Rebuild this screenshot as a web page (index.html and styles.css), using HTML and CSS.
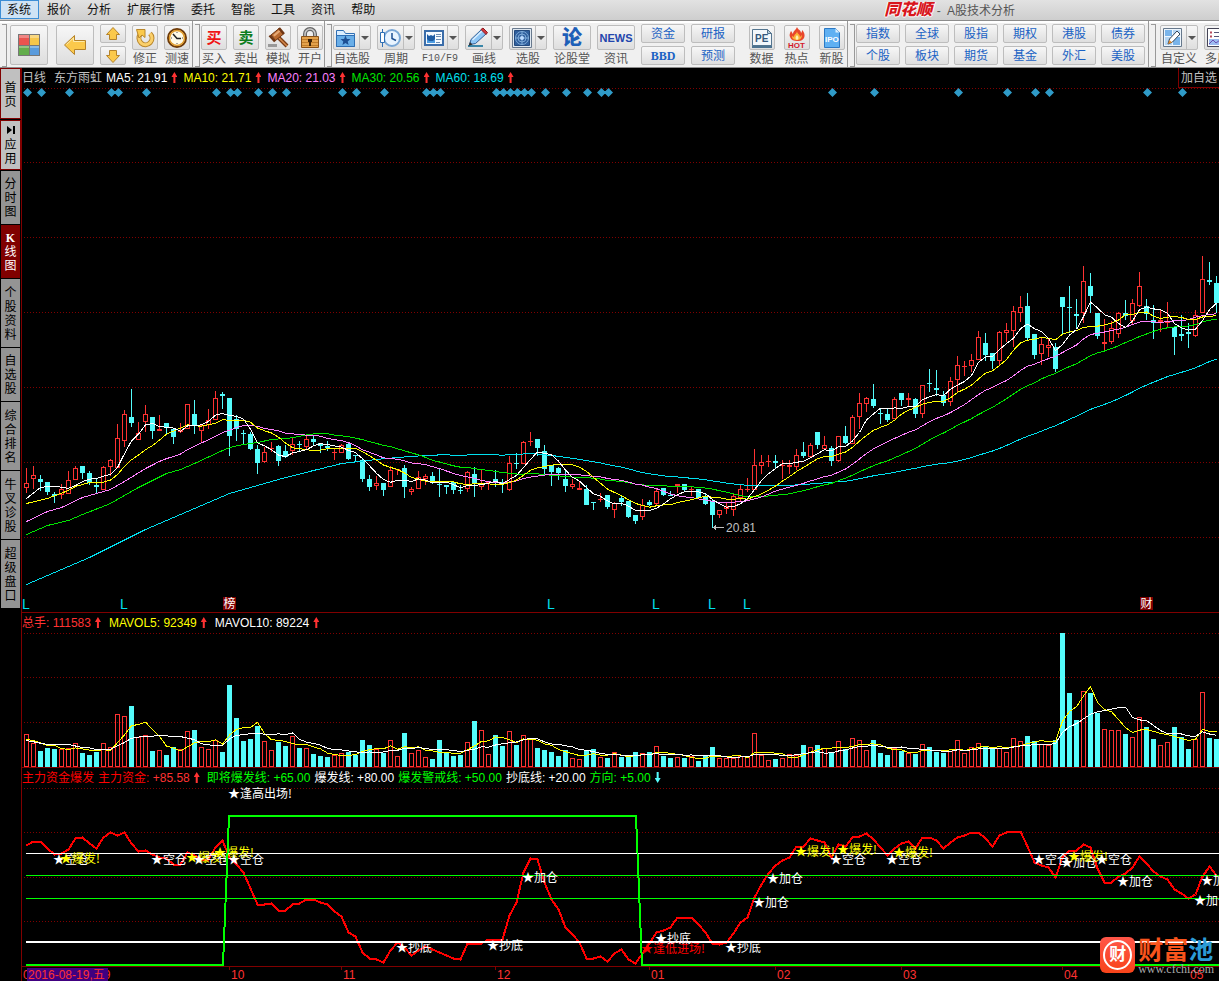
FILE: index.html
```
<!DOCTYPE html>
<html lang="zh-CN">
	<head>
		<meta charset="UTF-8">
		<title>同花顺 - A股技术分析</title>
		<link rel="stylesheet" href="styles.css">
	</head>
	<body>
		<header class="menubar">
			<nav class="menu">
				<a href="#" class="on">系统</a>
				<a href="#">报价</a>
				<a href="#">分析</a>
				<a href="#">扩展行情</a>
				<a href="#">委托</a>
				<a href="#">智能</a>
				<a href="#">工具</a>
				<a href="#">资讯</a>
				<a href="#">帮助</a>
			</nav>
			<h1 class="title"><b>同花顺</b> <span class="dash">-</span> A股技术分析</h1>
		</header>

		<div class="toolbar">
			<div class="group first">
				<button class="big" title="首页">
					<svg width="22" height="22"><path fill="#777" d="M0 0h22v22H0z"/><path fill="#e9544f" d="M1 1h10v10H1z"/><path fill="#f7c64a" d="M11 1h10v10H11z"/><path fill="#63ad4c" d="M1 11h10v10H1z"/><path fill="#5a9bdc" d="M11 11h10v10H11z"/><path fill="#fff" opacity=".3" d="M1 1h20v3H1zM1 11h20v3H1z"/><path stroke="#777" d="M11.500 1v20M1 11.500h20"/></svg>
				</button>
				<button class="big" title="返回">
					<svg width="24" height="24"><path fill="#fbc94b" stroke="#b5832a" d="M1.500 12L11.500 2.500V7.500H22.500V16.500H11.500V21.500Z"/><path stroke="#fdebac" fill="none" d="M3.500 11.500l7-6.500v3.500h11"/></svg>
				</button>
				<div class="stack arrows">
					<button title="上移"><svg width="14" height="14"><path fill="#fbc94b" stroke="#b5832a" d="M7 .5L13.500 7.500H10.500V12.500H3.500V7.500H.5Z"/></svg></button>
					<button title="下移"><svg width="14" height="14"><path fill="#fbc94b" stroke="#b5832a" d="M7 13.500L13.500 6.500H10.500V1.500H3.500V6.500H.5Z"/></svg></button>
				</div>
				<button class="tool">
					<span class="face"><svg width="22" height="22"><path fill="none" stroke="#b8862b" stroke-width="5" d="M6.500 7A6.500 6.500 0 1 0 16 6.500"/><path fill="none" stroke="#fbd06a" stroke-width="3" d="M6.500 7A6.500 6.500 0 1 0 16 6.500"/><path fill="#fbc94b" stroke="#b8862b" d="M2.500 2.500h8.500v8l-3-2.500-3 3z"/></svg></span>
					<span>修正</span>
				</button>
				<button class="tool">
					<span class="face"><svg width="22" height="22"><circle cx="11" cy="11" r="9" fill="#fffbe8" stroke="#6d3a08" stroke-width="2"/><circle cx="11" cy="11" r="7.500" fill="none" stroke="#e09a28" stroke-width="1.500"/><path fill="none" stroke="#222" stroke-width="1.500" d="M7 7l4 4.500h4"/><path stroke="#555" stroke-dasharray="1 10" d="M11 5v12M5 11h12"/></svg></span>
					<span>测速</span>
				</button>
			</div>

			<div class="group">
				<button class="tool"><span class="face buy">买</span><span>买入</span></button>
				<button class="tool"><span class="face sell">卖</span><span>卖出</span></button>
				<button class="tool">
					<span class="face"><svg width="22" height="22"><path stroke="#7b3c16" stroke-width="4" d="M11 10l9 9"/><path stroke="#d58a4c" stroke-width="1.500" d="M11 10l9 9"/><path fill="#b9692f" stroke="#6e3512" d="M4 8L12 1.500L16.500 7L8.500 13.500Z"/><path fill="#e6a873" d="M6 8l6-5 1.500 1.500-6 5z"/><path stroke="#6e3512" stroke-width="2.500" d="M2.500 8.500l5.500 6M12 1l5 6"/><path fill="#999" d="M1 17h9v3H1z"/></svg></span>
					<span>模拟</span>
				</button>
				<button class="tool">
					<span class="face"><svg width="22" height="22"><path fill="none" stroke="#666" stroke-width="4" d="M6 10V7a5 5 0 0 1 10 0v3"/><path fill="none" stroke="#ccc" stroke-width="1.500" d="M6 10V7a5 5 0 0 1 10 0v3"/><path fill="#e3a24c" stroke="#8a5218" d="M2.500 9.500h17v11h-17z"/><path stroke="#c07d2c" d="M3 12.500h16M3 15.500h16M3 18.500h16"/><path fill="#3c2308" d="M9 12h4v3h-1v4h-2v-4H9z"/></svg></span>
					<span>开户</span>
				</button>
			</div>

			<div class="group">
				<button class="tool wide">
					<span class="face"><svg width="22" height="22"><path fill="#dbeeff" stroke="#2f6fb4" d="M1.500 19.500v-16h7l2 3h9v13z"/><path fill="#69aee8" stroke="#2f6fb4" d="M1.500 8.500h18v11h-18z"/><path fill="#1d4f93" d="M10.500 8.500l1.400 3.400 3.600.2-2.800 2.300.9 3.500-3.100-2-3.100 2 .9-3.500L5.500 12.100l3.600-.2z"/></svg><i></i></span>
					<span>自选股</span>
				</button>
				<button class="tool wide">
					<span class="face"><svg width="22" height="22"><circle cx="13" cy="11" r="8" fill="#e9f4ff" stroke="#7aa7d6" stroke-width="2"/><path fill="none" stroke="#1d4f93" stroke-width="1.500" d="M13 6v5.500l4 2"/><path stroke="#2f6fb4" d="M3.500 2v18"/><path fill="#fff" stroke="#2f6fb4" d="M1.500 5.500h4v10h-4z"/></svg><i></i></span>
					<span>周期</span>
				</button>
				<button class="tool wide">
					<span class="face"><svg width="22" height="22"><path fill="#f5faff" stroke="#3b6da9" stroke-width="2" d="M2 4h18v14h-18z"/><path fill="#4c9be0" d="M4 10h8v6H4z"/><path fill="#1e5ca4" d="M4 7l2 2 2-1 2 1 2-2v5l-2 2H6l-2-2z"/><path stroke="#6c8db3" d="M13 7.500h5M13 9.500h5M13 12.500h5M13 15.500h4"/></svg><i></i></span>
					<span class="latin">F10/F9</span>
				</button>
				<button class="tool wide">
					<span class="face"><svg width="22" height="22"><path fill="#3a86a8" d="M1 18h15v2H1z"/><path fill="#8ec6f5" stroke="#2f5f98" d="M2.500 17.500l1.500-5L15 2l4.500 4.500L8.500 16.500z"/><path stroke="#d9eeff" stroke-width="1.500" d="M5.500 13L15 4"/><path fill="#d2363b" stroke="#8f1c22" d="M14 2.500L16 1l4.500 4.500L19 7.500z"/><path fill="#333" d="M1.500 19l1.500-4 2.500 2.500z"/></svg><i></i></span>
					<span>画线</span>
				</button>
				<button class="tool wide">
					<span class="face"><svg width="22" height="22"><path fill="#dfe8f1" stroke="#68798d" d="M1.500 1.500h19v19h-19z"/><path fill="#2f5f9d" stroke="#234a7e" d="M3.500 3.500h15v15h-15z"/><g fill="none" stroke="#7fabd8"><circle cx="11" cy="11" r="6.500"/><circle cx="11" cy="11" r="4"/><path d="M4 11h14M11 4v14"/></g><circle cx="11" cy="11" r="2" fill="#bddcff"/></svg><i></i></span>
					<span>选股</span>
				</button>
				<button class="tool wide"><span class="face lun">论</span><span>论股堂</span></button>
				<button class="tool wide"><span class="face news">NEWS</span><span>资讯</span></button>
				<div class="stack"><button>资金</button><button class="bbd">BBD</button></div>
				<div class="stack"><button>研报</button><button>预测</button></div>
				<button class="tool spaced">
					<span class="face"><svg width="22" height="22"><path fill="#4c7390" d="M1 18h20v3H1z"/><path fill="#f2f7fb" stroke="#54758f" d="M1.500 2.500h15l4 4v12h-19z"/><path fill="#b9cddd" stroke="#54758f" d="M16.500 2.500v4h4z"/><text x="4" y="15" class="pe">PE</text></svg></span>
					<span>数据</span>
				</button>
				<button class="tool spaced">
					<span class="face"><svg width="22" height="22"><path fill="#e8472b" d="M11 0c1 3 4 3 4 6 1-1 1-2 1-3 3 3 3 6 2 8-2 3-4 3-7 3s-6-1-7-4c-1-2 0-4 1-6 1 1 1 2 2 3C7 4 10 3 11 0z"/><path fill="#fbb33a" d="M11 4c0 3 3 3 3 6l2-2c0 3-2 5-5 5s-5-1-5-4l2 1c0-3 3-3 3-6z"/><path fill="#fff1b5" d="M11 8c2 2 2 4 0 5-2-1-2-3 0-5z"/><text x="2" y="21" class="hot">HOT</text></svg></span>
					<span>热点</span>
				</button>
				<button class="tool spaced">
					<span class="face"><svg width="22" height="22"><path fill="#5fb0f2" stroke="#2c79c4" d="M3.500 1.500h11l4 4v15h-15z"/><path fill="#d9efff" d="M14.500 1.500v4h4z"/><text x="4" y="15" class="ipo">IPO</text></svg></span>
					<span>新股</span>
				</button>
			</div>

			<div class="group pairs">
				<div class="stack"><button>指数</button><button>个股</button></div>
				<div class="stack"><button>全球</button><button>板块</button></div>
				<div class="stack"><button>股指</button><button>期货</button></div>
				<div class="stack"><button>期权</button><button>基金</button></div>
				<div class="stack"><button>港股</button><button>外汇</button></div>
				<div class="stack"><button>债券</button><button>美股</button></div>
			</div>

			<div class="group last">
				<button class="tool wide">
					<span class="face"><svg width="22" height="22"><path fill="#eef6fd" stroke="#66788c" d="M1.500 1.500h18v18h-18z"/><path fill="#79b4ea" d="M3 3h7v6H3z"/><path fill="#b4d5f3" d="M11 3h7v6h-7zM3 10h7v8H3z"/><path fill="#79b4ea" d="M11 10h7v8h-7z"/><path fill="#fff" stroke="#345" d="M6 17l1.500-5L15 4l3 3-7.500 8z"/><path fill="#e48a2c" d="M6 17l1.500-4 2.500 2.500z"/></svg><i></i></span>
					<span>自定义</span>
				</button>
				<button class="tool wide">
					<span class="face"><svg width="22" height="22"><path fill="#fff" stroke="#445" d="M1.500 1.500h18v18h-18z"/><path stroke="#b74a5c" stroke-width="2" d="M4 5.500h2M4 9.500h2"/><path stroke="#557" d="M8 5.500h9M8 9.500h9"/><path fill="#9dbcf0" d="M3 12h15v6H3z"/><path fill="none" stroke="#6a4fb0" d="M3 17l4-4 3 3 4-3 4 3"/></svg><i></i></span>
					<span>多周期</span>
				</button>
			</div>
		</div>

		<main class="work">
			<nav class="side">
				<a href="#" class="light home">首页</a>
				<a href="#" class="light"><svg width="8" height="8"><path fill="#000" d="M0 0l5 4-5 4zM6 0h2v8H6z"/></svg>应用</a>
				<a href="#">分时图</a>
				<a href="#" class="on"><b>K</b>线图</a>
				<a href="#" class="four">个股资料</a>
				<a href="#">自选股</a>
				<a href="#" class="four">综合排名</a>
				<a href="#" class="four">牛叉诊股</a>
				<a href="#" class="four">超级盘口</a>
			</nav>

			<div class="charts">
				<section class="panel">
					<div class="legend ma">
						<span class="grey name">日线</span>
						<span class="grey">东方雨虹</span>
						<span class="white">MA5: 21.91<i class="up"></i></span>
						<span class="yellow">MA10: 21.71<i class="up"></i></span>
						<span class="pink">MA20: 21.03<i class="up"></i></span>
						<span class="green">MA30: 20.56<i class="up"></i></span>
						<span class="cyan">MA60: 18.69<i class="up"></i></span>
						<button class="add">加自选</button>
					</div>
					<svg id="price" height="526"></svg>
				</section>
				<section class="panel">
					<div class="legend vol">
						<span class="red">总手: 111583<i class="up"></i></span>
						<span class="yellow">MAVOL5: 92349<i class="up"></i></span>
						<span class="white">MAVOL10: 89224<i class="up"></i></span>
					</div>
					<svg id="volume" height="136"></svg>
				</section>
				<section class="panel">
					<div class="legend">
						<span class="pure">主力资金爆发</span>
						<span class="red"><em class="pure">主力资金:</em> +85.58<i class="up"></i></span>
						<span class="lime after">即将爆发线: +65.00</span>
						<span class="white">爆发线: +80.00</span>
						<span class="lime">爆发警戒线: +50.00</span>
						<span class="white">抄底线: +20.00</span>
						<span class="lime">方向: +5.00<i class="down"></i></span>
					</div>
					<svg id="signal" height="195"></svg>
				</section>
				<a href="#" class="mark">
					<span class="seal"><span>财</span></span>
					<span class="brand">
						<b>财富<em>池</em></b>
						<small>www.cfchi.com</small>
					</span>
				</a>
			</div>
		</main>
		<script src="chart.js"></script>
	</body>
</html>
```
FILE: styles.css
```
* {
	margin: 0;
	padding: 0;
	box-sizing: border-box;
}
body {
	background: #000;
	font: 12px/14px "Liberation Sans", "Noto Sans CJK SC", sans-serif;
	overflow-x: hidden;
}
a {
	color: inherit;
	text-decoration: none;
}
em, i {
	font-style: normal;
}
button {
	font: inherit;
	color: inherit;
	background: none;
	border: none;
	cursor: pointer;
}

/* 菜單欄 */
.menubar {
	display: flex;
	height: 20px;
	background: linear-gradient(#e2e2e2, #cecece);
}
.menu {
	display: flex;
}
.menu a {
	padding: 0 8px;
	line-height: 21px;
	color: #111;
}
.menu a.on {
	padding: 0 7px 0 6px;
	line-height: 19px;
	height: 19px;
	border: 1px solid #3c8ed6;
	background: #cfe3f5;
}
.title {
	margin: 0 204px 0 auto;
	font-size: 12px;
	font-weight: normal;
	line-height: 23px;
	color: #555;
	white-space: nowrap;
}
.title b {
	font-size: 16px;
	font-style: italic;
	font-weight: 900;
	line-height: 20px;
	color: #d8161c;
	text-shadow: 1px 0 #fff, -1px 0 #fff, 0 1px #fff;
	vertical-align: top;
}
.title .dash {
	margin: 0 3px 0 1px;
}

/* 工具欄 */
.toolbar {
	display: flex;
	height: 48px;
	overflow: hidden;
	color: #555;
	background: #f0f0f0;
	border-top: 1px solid #8c8c8c;
	border-bottom: 1px solid #8c8c8c;
	box-shadow: inset 0 2px #fff;
}
.group {
	position: relative;
	display: flex;
	align-items: flex-start;
	flex-shrink: 0;
	gap: 6px;
	padding: 3px 1px 0 8px;
	border-right: 1px solid #999;
}
.group::before {
	content: "";
	position: absolute;
	left: 2px;
	top: 3px;
	width: 4px;
	height: 41px;
	border: 1px solid #999;
	border-left: none;
}
.group.first {
	padding-left: 10px;
	padding-right: 2px;
}
.group.pairs {
	gap: 5px;
	padding-right: 3px;
}
.group.last {
	padding-left: 11px;
	border: none;
}
.big, .face, .stack button {
	display: flex;
	align-items: center;
	justify-content: center;
	border: 1px solid #bdbdbd;
	border-radius: 2px;
	background: linear-gradient(#f7f7f7, #dedede);
}
.big {
	width: 38px;
	height: 40px;
	margin-top: 1px;
}
.big:first-child {
	margin-right: 2px;
}
.tool {
	display: flex;
	flex-direction: column;
	align-items: center;
	flex-shrink: 0;
	width: 26px;
	padding-top: 1px;
	line-height: 18px;
	white-space: nowrap;
}
.face {
	flex-shrink: 0;
	width: 26px;
	height: 25px;
}
.wide {
	width: 38px;
}
.wide .face {
	width: 38px;
}
.face i {
	width: 12px;
	height: 24px;
	margin: 0 -1px 0 2px;
	border-left: 1px solid #bdbdbd;
	display: flex;
	align-items: center;
	justify-content: center;
}
.face i::after {
	content: "";
	border: 4px solid transparent;
	border-top-color: #555;
	border-bottom: none;
}
.spaced {
	width: 29px;
}
.stack + .spaced {
	margin-left: 6px;
}
.face.buy, .face.sell, .face.lun {
	font-size: 15px;
	font-weight: bold;
	color: #f01414;
}
.face.sell {
	color: #0b7d1d;
}
.face.lun {
	font-size: 20px;
	font-weight: 900;
	color: #1d5fb8;
}
.face.news {
	font-weight: bold;
	font-size: 11px;
	color: #2346ad;
}
.latin {
	font-family: "Liberation Mono", monospace;
	font-size: 10px;
}
.pe {
	font: bold 10px "Liberation Sans", sans-serif;
	fill: #35577c;
}
.hot {
	font: bold 8px "Liberation Sans", sans-serif;
	fill: #d3182b;
}
.ipo {
	font: bold 8px "Liberation Sans", sans-serif;
	fill: #fff;
}
.stack {
	display: flex;
	flex-direction: column;
	gap: 3px;
}
.stack button {
	width: 44px;
	height: 19px;
	padding-top: 1px;
	color: #1a62c4;
}
.arrows button {
	width: 26px;
}
.stack .bbd {
	font: bold 12px "Liberation Serif", serif;
}

/* 左側導航 */
.work {
	display: flex;
}
.side {
	display: flex;
	flex-direction: column;
	gap: 1px;
	flex: 0 0 21px;
	padding: 0 1px;
}
.side a {
	padding: 6px 3px 5px;
	background: #949494;
	color: #000;
	text-align: center;
	word-break: break-all;
}
.side a.four {
	padding: 7px 3px 5px;
}
.side a.light {
	margin: 0 -1px;
	background: #c0c0c0;
	border: 1px solid #800000;
	padding: 4px 3px 3px;
}
.side a.home {
	padding: 12px 3px 9px;
}
.side a.on {
	background: #800000;
	color: #fff;
}
.side b {
	display: block;
	font-family: "Liberation Serif", serif;
}
.side svg {
	display: block;
	margin: 1px auto 4px;
}

/* 圖表 */
.charts {
	position: relative;
	flex: 1;
	min-width: 0;
	border-left: 1px solid #800000;
}
.panel + .panel {
	border-top: 1px solid #800000;
}
.panel > svg {
	display: block;
	width: 100%;
}
.legend {
	position: relative;
	display: flex;
	gap: 4px;
	height: 18px;
	line-height: 20px;
	white-space: nowrap;
}
.legend.ma .up {
	margin-right: 2px;
}
.legend.vol {
	gap: 8px;
}
.legend .name {
	margin-right: 4px;
}
.legend .after {
	margin-left: 3px;
}
.up, .down {
	display: inline-block;
	width: 6px;
	height: 11px;
	margin-left: 4px;
	background: #ff3232;
	clip-path: polygon(50% 0, 100% 45%, 67% 45%, 67% 100%, 33% 100%, 33% 45%, 0 45%);
	vertical-align: -1px;
}
.down {
	background: #54fcfc;
	clip-path: polygon(50% 100%, 100% 55%, 67% 55%, 67% 0, 33% 0, 33% 55%, 0 55%);
}
.add {
	position: absolute;
	top: 0;
	right: 0;
	width: 41px;
	height: 20px;
	line-height: 20px;
	color: #c0c0c0;
	border-left: 1px solid #800000;
	border-bottom: 1px solid #800000;
}
.grey { color: #c0c0c0; }
.white { color: #fff; }
.yellow { color: #ff0; }
.pink { color: #ff80ff; }
.green { color: #00e600; }
.cyan { color: #00e0f0; }
.red { color: #ff3232; }
.pure { color: #f00; }
.lime { color: #0f0; }

.crisp {
	fill: none;
	shape-rendering: crispEdges;
}
.grid {
	stroke: #800000;
	stroke-dasharray: 1 2;
}
.rise { stroke: #ff3232; }
.fall { stroke: #54fcfc; }
.body { fill: #54fcfc; }
.solid { fill: #ff3232; }
.dots { fill: #2f9bc8; }
.tag { fill: #800000; }
.note {
	font: 12px "Noto Sans CJK SC", sans-serif;
}
.num {
	font: 12px "Liberation Sans", sans-serif;
}
.lmark {
	font: 14px "Liberation Sans", sans-serif;
	fill: #00e0f0;
}

/* 右下角水印 */
.mark {
	position: absolute;
	right: 5px;
	bottom: 6px;
	display: flex;
	gap: 3px;
}
.seal {
	width: 35px;
	height: 36px;
	padding: 3px;
	border-radius: 6px;
	background: linear-gradient(#ff5548, #f8441a);
}
.seal span {
	display: block;
	height: 30px;
	border: 2px solid #fff;
	border-radius: 50%;
	font-size: 17px;
	font-weight: bold;
	line-height: 25px;
	text-align: center;
	color: #fff;
}
.brand b {
	display: block;
	font-size: 25px;
	line-height: 26px;
	color: #f9541c;
}
.brand em {
	color: #2c9bd6;
}
.brand small {
	display: block;
	font: 12px/12px "Liberation Serif", serif;
	color: #aaa;
}
```
FILE: chart.js
```
(function() {
	var LEFT = 26, STEP = 7, BASE = 767;

	// 每根K線: 漲跌(1漲 0跌), 最高, 實體上沿, 實體下沿, 最低
	var candles = [
		[1,468,483,488,493],[1,466,475,479,489],[0,475,479,482,491],[0,482,482,492,495],[0,492,494,496,503],
		[1,484,489,495,499],[1,471,480,494,494],[1,466,468,480,480],[0,466,466,473,479],[0,471,473,483,485],
		[0,479,485,487,493],[1,466,467,490,490],[1,459,460,467,476],[1,424,438,468,468],[1,410,414,441,447],
		[0,389,417,423,427],[1,422,433,440,440],[1,405,414,422,432],[0,417,417,431,439],[1,415,429,431,431],
		[0,423,423,427,435],[0,428,429,437,444],[1,423,430,432,433],[1,404,404,429,429],[0,400,414,426,434],
		[1,424,425,431,442],[1,409,420,425,429],[1,391,398,420,420],[0,392,394,396,409],[0,398,398,436,456],
		[0,415,419,429,441],[0,430,433,434,444],[0,432,434,449,450],[0,445,449,463,474],[1,447,452,462,463],
		[1,442,448,449,452],[0,445,446,461,466],[0,445,451,457,458],[1,438,444,451,455],[0,441,444,445,451],
		[1,435,439,447,449],[0,436,439,442,446],[0,443,443,446,453],[0,441,446,448,451],[1,448,452,453,460],
		[1,444,445,453,453],[0,443,444,459,460],[0,455,455,456,461],[0,459,460,479,482],[0,475,479,487,491],
		[1,476,483,486,490],[0,483,483,490,496],[1,466,470,487,487],[1,469,469,470,475],[0,465,468,487,498],
		[1,487,489,492,495],[1,471,477,489,489],[1,474,476,479,485],[0,472,476,483,484],[0,469,484,485,497],
		[0,485,485,487,494],[0,481,482,490,494],[0,485,490,491,494],[1,471,472,489,492],[0,467,474,484,497],
		[1,470,484,487,490],[1,482,482,483,490],[0,470,479,482,487],[0,479,482,484,493],[1,456,463,490,491],
		[0,453,463,464,469],[1,441,442,464,464],[1,432,441,442,446],[0,439,439,448,456],[0,445,451,469,474],
		[0,465,465,472,486],[0,467,468,473,480],[0,470,479,486,492],[1,479,484,487,489],[1,482,488,490,490],
		[0,485,489,505,505],[0,502,502,503,510],[1,493,499,500,502],[0,495,495,507,509],[1,502,503,510,518],
		[0,495,498,502,506],[0,501,501,517,518],[0,515,515,521,524],[1,499,505,517,520],[0,500,502,505,506],
		[1,488,491,504,505],[0,488,488,495,496],[0,491,495,496,496],[1,484,484,486,493],[0,484,484,490,491],
		[1,487,489,490,496],[0,489,489,498,498],[0,493,497,504,505],[0,499,501,515,528],[1,510,510,515,518],
		[1,502,506,509,514],[1,494,496,510,516],[1,485,489,498,501],[1,478,489,490,492],[1,449,465,490,490],
		[1,455,462,466,474],[1,455,461,462,467],[0,455,461,463,468],[1,460,465,466,479],[1,460,465,467,474],
		[1,449,455,467,470],[0,442,452,456,458],[1,443,445,457,458],[0,432,432,445,449],[1,436,445,449,450],
		[0,446,448,461,466],[1,436,436,461,462],[0,426,436,443,444],[1,415,417,444,444],[1,393,403,417,429],
		[1,397,398,404,412],[0,384,399,406,408],[0,409,413,414,424],[0,409,414,420,422],[1,397,399,419,419],
		[0,393,393,400,406],[1,393,398,400,406],[0,398,399,414,418],[1,385,385,414,418],[0,369,383,384,392],
		[0,370,388,390,396],[0,391,395,403,406],[1,377,381,402,406],[1,356,365,380,393],[1,361,366,367,376],
		[1,354,360,366,372],[1,331,337,360,360],[0,333,343,355,361],[0,353,353,361,369],[1,331,332,361,365],
		[1,323,330,333,342],[1,306,311,331,347],[1,296,307,313,322],[0,293,306,338,340],[0,334,334,355,359],
		[1,338,344,354,365],[1,339,345,348,357],[0,343,347,369,372],[0,297,297,307,335],[0,286,307,308,333],
		[0,299,314,316,328],[1,266,281,313,323],[0,273,286,296,313],[0,313,313,336,339],[1,319,342,344,350],
		[1,321,328,342,344],[1,312,313,334,338],[0,300,313,316,320],[1,299,303,321,325],[1,272,286,306,307],
		[0,299,306,314,320],[0,305,320,323,339],[1,309,320,322,332],[1,302,321,323,327],[0,327,327,337,355],
		[0,315,334,336,341],[0,323,332,334,348],[1,310,315,336,337],[1,256,279,313,313],[0,262,280,282,285],
		[0,276,283,303,313]
	];

	// 成交量柱頂
	var volumes = [
		734,743,751,748,749,749,748,743,753,755,752,743,747,714,716,706,737,735,751,750,
		755,747,749,731,730,747,749,740,752,685,718,741,739,726,741,750,742,746,736,748,
		748,754,756,757,755,753,752,755,740,745,749,753,740,756,733,753,750,757,759,740,
		753,756,755,742,721,730,754,735,746,731,745,735,739,748,750,752,756,750,758,759,
		750,749,757,758,752,757,757,752,753,752,746,756,758,757,758,756,761,756,747,758,
		758,758,756,756,733,755,760,759,758,754,755,745,747,745,748,753,741,749,738,740,
		750,740,753,755,748,751,753,754,744,747,752,753,751,740,753,747,743,746,747,748,
		752,738,741,736,741,744,745,740,633,693,720,691,693,713,729,730,730,734,737,717,
		727,739,745,742,727,737,749,739,692,738,739
	];

	// 主力資金
	var funds = [
		845,841,841,848,854,853,849,838,837,843,848,837,832,835,832,843,851,850,854,857,
		858,864,864,852,855,859,859,847,840,857,864,872,888,904,904,903,910,910,904,903,
		899,899,902,904,911,916,932,936,952,958,959,962,950,942,947,955,950,946,949,952,
		955,958,959,943,943,943,939,939,939,915,902,872,858,859,882,899,909,927,934,942,
		958,958,956,961,953,949,959,963,953,943,932,930,927,917,917,917,924,932,943,944,
		942,933,922,917,897,884,873,865,860,857,846,846,838,840,842,857,844,846,837,836,
		833,839,847,855,848,843,841,848,837,837,840,848,842,837,835,832,832,838,846,835,
		832,831,831,846,862,865,867,877,857,850,850,844,847,868,882,882,876,873,867,856,
		863,871,876,879,889,893,898,894,876,866,875
	];

	var marks = [
		[53,859,'空仓','#fff'],[60,858,'爆发!','#ff0'],[151,859,'空仓','#fff'],[186,857,'爆发!','#ff0'],
		[193,859,'空仓','#fff'],[214,852,'爆发!','#ff0'],[228,859,'空仓','#fff'],[228,793,'逢高出场!','#fff'],
		[396,947,'抄底','#fff'],[487,945,'抄底','#fff'],[522,877,'加仓','#fff'],[641,948,'逢低进场!','#f00'],
		[655,938,'抄底','#fff'],[725,947,'抄底','#fff'],[753,902,'加仓','#fff'],[767,878,'加仓','#fff'],
		[795,851,'爆发!','#ff0'],[837,849,'爆发!','#ff0'],[830,859,'空仓','#fff'],[886,859,'空仓','#fff'],
		[893,852,'爆发!','#ff0'],[1033,859,'空仓','#fff'],[1061,862,'加仓','#fff'],[1068,856,'爆发!','#ff0'],
		[1096,859,'空仓','#fff'],[1117,881,'加仓','#fff'],[1194,900,'加仓','#fff'],[1201,880,'加仓','#fff']
	];

	var diamonds = [27,41,69,111,118,146,216,230,237,258,272,286,342,356,384,426,433,440,496,503,510,
		517,524,531,545,566,587,601,608,832,874,958,1007,1035,1049,1147,1182];

	function px(i) {
		return LEFT + STEP * i;
	}

	function line(values, color, width) {
		var pts = values.map(function(v, i) {
			return (px(i) + 0.5) + ',' + (v + 0.5).toFixed(1);
		});
		return '<polyline class="crisp" stroke="' + color + '" stroke-width="' + (width || 1) +
			'" points="' + pts.join(' ') + '"/>';
	}

	// 均線: 數據不足n根的部分用head中的[序號, 值]插值
	function average(data, n, head) {
		return data.map(function(d, i) {
			if (i >= n - 1) {
				var sum = 0;
				for (var k = i - n + 1; k <= i; k++) {
					sum += data[k];
				}
				return sum / n;
			}
			for (var j = 1; j < head.length - 1 && head[j][0] < i; j++) {}
			var a = head[j - 1], b = head[j];
			return a[1] + (b[1] - a[1]) * (i - a[0]) / (b[0] - a[0]);
		});
	}

	function grid(rows) {
		return rows.map(function(y) {
			return '<line class="crisp grid" x1="24" x2="200%" y1="' + (y + 0.5) + '" y2="' + (y + 0.5) + '"/>';
		}).join('');
	}

	function text(cls, x, y, str, color) {
		return '<text class="' + cls + '" x="' + x + '" y="' + y + '" fill="' + color + '">' + str + '</text>';
	}

	// top是該圖第一行的縱座標
	function draw(id, top, html) {
		document.getElementById(id).innerHTML =
			'<g transform="translate(-22,' + (-top) + ')">' + html + '</g>';
	}

	function drawPrice() {
		var rise = '', fall = '', body = '', solid = '';
		candles.forEach(function(c, i) {
			var x = px(i), h = c[3] - c[2];
			if (c[0]) {
				rise += 'M' + (x + 0.5) + ' ' + c[1] + 'V' + c[2] + 'M' + (x + 0.5) + ' ' + c[3] + 'V' + c[4];
				if (h > 2) {
					rise += 'M' + (x - 1.5) + ' ' + (c[2] + 0.5) + 'h4v' + (h - 1) + 'h-4z';
				} else {
					solid += 'M' + (x - 2) + ' ' + c[2] + 'h5v' + h + 'h-5z';
				}
			} else {
				fall += 'M' + (x + 0.5) + ' ' + c[1] + 'V' + c[4];
				body += 'M' + (x - 2) + ' ' + c[2] + 'h5v' + h + 'h-5z';
			}
		});
		var close = candles.map(function(c) {
			return c[0] ? c[2] : c[3];
		});
		var html = grid([88, 162, 237, 312, 387, 462, 537]);
		html += '<path class="crisp rise" d="' + rise + '"/><path class="crisp fall" d="' + fall + '"/>';
		html += '<path class="body" d="' + body + '"/><path class="solid" d="' + solid + '"/>';
		html += line(average(close, 60, [[0,584],[5,569],[9,557],[13,543],[17,529],[21,517],[26,502],[29,493],
			[32,487],[36,479],[41,470],[45,463],[50,459],[53,457],[57,455],[59,455]]), '#00e0f0');
		html += line(average(close, 30, [[0,534],[3,525],[6,520],[8,514],[12,503],[16,487],[20,473],[22,469],[24,463],[28,450]]), '#00e600');
		html += line(average(close, 20, [[0,521],[3,511],[5,507],[8,497],[12,489],[14,481],[17,468],[19,461]]), '#ff80ff');
		html += line(average(close, 10, [[0,503],[3,498],[6,490],[7,486],[9,482]]), '#ff0');
		html += line(average(close, 5, [[0,498],[2,487],[3,486]]), '#fff');
		html += '<path class="dots" d="' + diamonds.map(function(x) {
			return 'M' + (x - 4) + ' 92.500l4.500-4.500 4.500 4.500-4.500 4.500z';
		}).join('') + '"/>';
		[23, 121, 548, 653, 709, 744].forEach(function(x) {
			html += text('lmark', x - 1, 609, 'L', '#00e0f0');
		});
		[[223, '榜'], [1140, '财']].forEach(function(t) {
			html += '<rect class="tag" x="' + t[0] + '" y="597" width="13" height="13"/>' + text('note', t[0] + 0.5, 608, t[1], '#fff');
		});
		html += '<path class="crisp" stroke="#c0c0c0" d="M713 527.500h11M714.500 526v3M715.500 525v5"/>';
		html += text('num', 726, 532, '20.81', '#c0c0c0');
		draw('price', 86, html);
	}

	function drawVolume() {
		var rise = '', body = '';
		volumes.forEach(function(v, i) {
			var x = px(i);
			if (candles[i][0]) {
				rise += 'M' + (x - 1.5) + ' ' + (v + 0.5) + 'h4V' + (BASE - 0.5) + 'h-4z';
			} else {
				body += 'M' + (x - 2) + ' ' + v + 'h5V' + BASE + 'h-5z';
			}
		});
		draw('volume', 631, grid([633, 677, 722]) +
			'<path class="crisp rise" d="' + rise + '"/><path class="body" d="' + body + '"/>' +
			line(average(volumes, 5, [[0,739],[1,740],[3,745]]), '#ff0') +
			line(average(volumes, 10, [[0,740],[3,744],[6,744],[8,747]]), '#fff'));
	}

	function drawSignal() {
		var html = grid([788, 832, 877, 921]);
		html += '<path class="crisp" stroke="#800000" d="M22 966.500H4000M229.500 966v4M341.500 966v4M495.500 966v4M649.500 966v4M775.500 966v4M901.500 966v4M1062.500 966v4M1188.500 966v4"/>';
		html += line(funds, '#f00', 2);
		html += '<path class="crisp" stroke="#fff" d="M26 853.500H4000"/>';
		html += '<path class="crisp" stroke="#0f0" d="M26 875.500H4000M26 898.500H4000"/>';
		html += '<path class="crisp" stroke="#fff" stroke-width="2" d="M26 942H4000"/>';
		marks.forEach(function(m) {
			html += text('note', m[0], m[1] + 5, '★' + m[2], m[3]);
		});
		html += '<path class="crisp" stroke="#0f0" stroke-width="2" d="M26 965H223L229 816H636L642 965H4000"/>';
		[['08',23],['09',97],['10',231],['11',343],['12',497],['01',651],['02',777],['03',903],['04',1064],['05',1190]].forEach(function(t) {
			html += text('num', t[1], 979, t[0], '#ff3232');
		});
		html += '<rect fill="#400080" x="27" y="968" width="81" height="13"/>' +
			'<text class="num" x="28" y="979" fill="#ff3232">2016-08-19,<tspan class="note">五</tspan></text>';
		draw('signal', 786, html);
	}

	drawPrice();
	drawVolume();
	drawSignal();
}());
```
